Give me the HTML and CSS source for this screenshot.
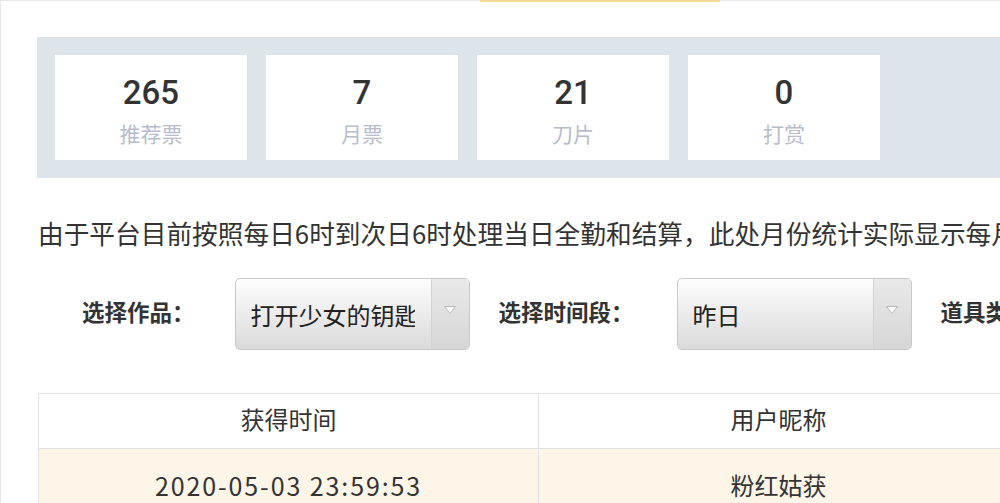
FILE: index.html
```html
<!DOCTYPE html>
<html lang="zh-CN">
<head>
<meta charset="utf-8">
<title>作品数据</title>
<link rel="stylesheet" href="styles.css">
</head>
<body>
<div class="page">
  <div class="topbar"><div class="tab-active"></div></div>

  <div class="stats">
    <div class="stat-card"><div class="stat-num">265</div><div class="stat-label">推荐票</div></div>
    <div class="stat-card"><div class="stat-num">7</div><div class="stat-label">月票</div></div>
    <div class="stat-card"><div class="stat-num">21</div><div class="stat-label">刀片</div></div>
    <div class="stat-card"><div class="stat-num">0</div><div class="stat-label">打赏</div></div>
  </div>

  <p class="notice">由于平台目前按照每日6时到次日6时处理当日全勤和结算，此处月份统计实际显示每月1日6时至次月1日6时的数据</p>

  <div class="filters">
    <span class="filter-label label-work">选择作品：</span>
    <div class="select">
      <span class="select-text">打开少女的钥匙</span>
      <span class="select-arrow">
        <svg width="14" height="10" viewBox="0 0 14 10"><polygon points="1.5,1.5 12.5,1.5 7,8.5" fill="#fff" stroke="#b9b9b9" stroke-width="1" stroke-linejoin="round"/></svg>
      </span>
    </div>
    <span class="filter-label label-time">选择时间段：</span>
    <div class="select">
      <span class="select-text">昨日</span>
      <span class="select-arrow">
        <svg width="14" height="10" viewBox="0 0 14 10"><polygon points="1.5,1.5 12.5,1.5 7,8.5" fill="#fff" stroke="#b9b9b9" stroke-width="1" stroke-linejoin="round"/></svg>
      </span>
    </div>
    <span class="filter-label label-prop">道具类型：</span>
  </div>

  <table class="records">
    <thead>
      <tr><th class="col-time">获得时间</th><th class="col-user">用户昵称</th></tr>
    </thead>
    <tbody>
      <tr><td class="cell-time">2020-05-03 23:59:53</td><td>粉红姑获</td></tr>
    </tbody>
  </table>
</div>
</body>
</html>
```

FILE: styles.css
```css
* { box-sizing: border-box; }

html, body {
  margin: 0;
  padding: 0;
  background: #fff;
}

body {
  font-family: "Noto Sans CJK SC", "Noto Sans", sans-serif;
  color: #333;
}

.page {
  width: 1000px;
  height: 503px;
  overflow: hidden;
  border-left: 1px solid #e6e6e6;
}

/* tab strip above the panel, with the active tab underline */
.topbar {
  height: 1px;
  background: #e8e8e8;
}
.tab-active {
  margin-left: 479px;
  width: 240px;
  height: 2px;
  background: #f3dc96;
}

/* summary cards */
.stats {
  margin: 36px 0 0 36px;
  padding: 18px;
  background: #dde4ea;
  display: flex;
  gap: 19px;
}
.stat-card {
  width: 192px;
  height: 105px;
  background: #fff;
  display: flex;
  flex-direction: column;
  align-items: center;
  padding-top: 22px;
}
.stat-num {
  font-family: Roboto, "Liberation Sans", sans-serif;
  font-weight: 500;
  font-size: 33px;
  line-height: 32px;
  color: #333;
}
.stat-label {
  margin-top: 12px;
  font-size: 21px;
  line-height: 24px;
  color: #b7bccb;
}

.notice {
  margin: 37px 0 0 0;
  padding-left: 37px;
  font-size: 25.7px;
  line-height: 36px;
  white-space: nowrap;
  overflow: hidden;
  color: #333;
}

/* filter row */
.filters {
  margin-top: 27px;
  padding-left: 81px;
  display: flex;
  align-items: center;
  height: 72px;
  white-space: nowrap;
}
.filter-label {
  font-size: 22.5px;
  font-weight: 600;
  color: #333;
  flex-shrink: 0;
  padding-bottom: 7px;
}
.label-work { margin-right: 40px; }
.label-time { margin-left: 29px; margin-right: 43px; }
.label-prop { margin-left: 29px; }

.select {
  flex-shrink: 0;
  width: 235px;
  height: 72px;
  border: 1px solid #c9c9c9;
  border-radius: 5px;
  background: linear-gradient(#fdfdfd, #dadada);
  display: flex;
  align-items: center;
  overflow: hidden;
}
.select-text {
  width: 179px;
  padding-left: 15px;
  font-size: 24px;
  color: #222;
  overflow: hidden;
  white-space: nowrap;
  flex-shrink: 0;
  margin-right: 16px;
}
.select-arrow {
  flex: 1;
  align-self: stretch;
  border-left: 1px solid #d2d2d2;
  background: linear-gradient(#e9e9e9, #d6d6d6);
  display: flex;
  align-items: center;
  justify-content: center;
  padding-bottom: 8px;
}

/* records table */
.records {
  margin: 43px 0 0 37px;
  width: 980px;
  border-collapse: collapse;
  table-layout: fixed;
  font-size: 24px;
  color: #333;
}
.records th,
.records td {
  border: 1px solid #e2e2e2;
  text-align: center;
  font-weight: normal;
  padding: 0 0 5px 0;
}
.col-time { width: 500px; }
.col-user { width: 480px; }
.records thead tr { height: 55px; background: #fff; }
.records tbody tr { height: 77px; background: #fcf5e8; }
.records .cell-time {
  font-size: 25px;
  letter-spacing: 1.9px;
}
```
